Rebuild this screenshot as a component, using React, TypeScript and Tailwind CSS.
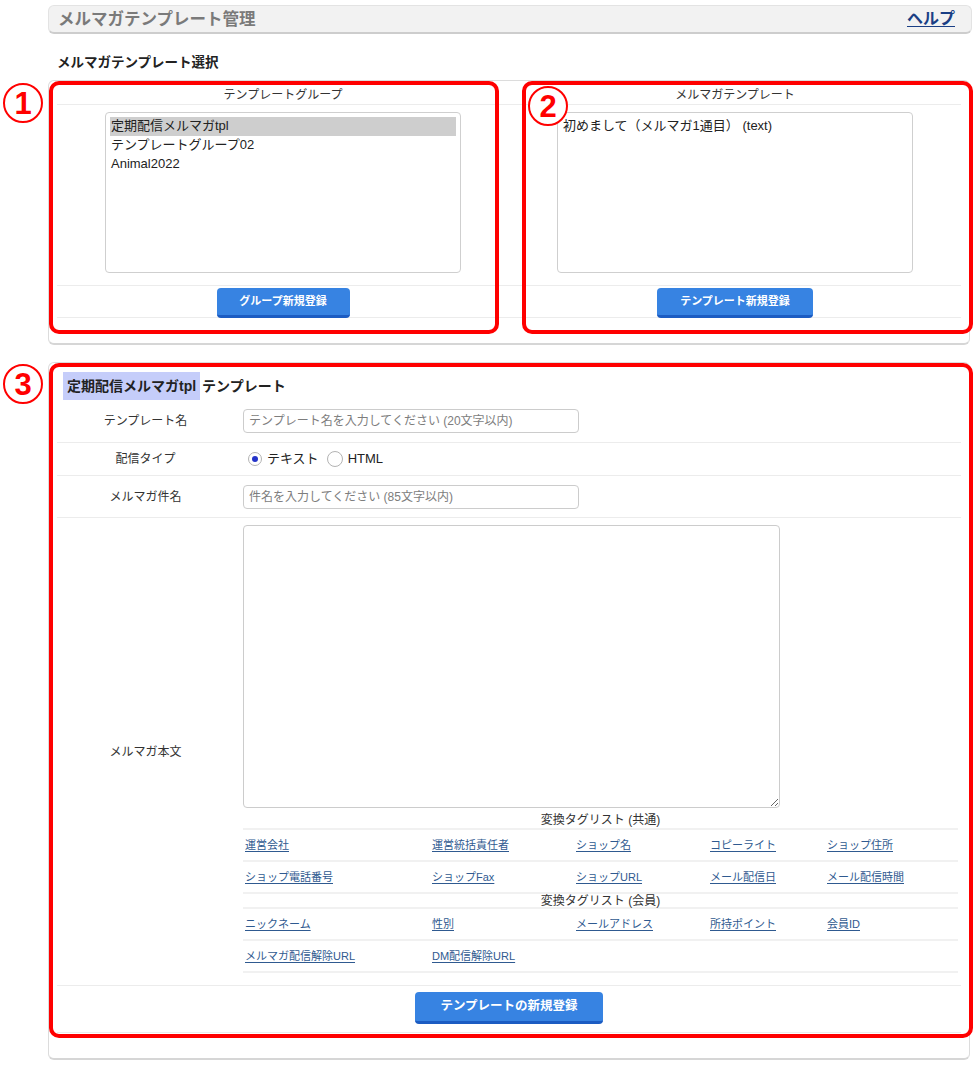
import React from "react";

const tagRows1 = [
  ["運営会社", "運営統括責任者", "ショップ名", "コピーライト", "ショップ住所"],
  ["ショップ電話番号", "ショップFax", "ショップURL", "メール配信日", "メール配信時間"],
];
const tagRows2 = [
  ["ニックネーム", "性別", "メールアドレス", "所持ポイント", "会員ID"],
  ["メルマガ配信解除URL", "DM配信解除URL"],
];

function TagRow({ items }: { items: string[] }) {
  return (
    <div className="grid grid-cols-[187px_144px_134px_117px_1fr] pl-[2px] h-[32px] items-center border-b-2 border-[#f1f1f1]">
      {items.map((t) => (
        <a key={t} href="#" className="text-[11px] text-[#2f5a90] underline underline-offset-2 leading-none">
          {t}
        </a>
      ))}
    </div>
  );
}

function BlueButton({ children, className }: { children: React.ReactNode; className: string }) {
  return (
    <button
      className={
        "rounded-[4px] bg-[#3783e2] border-b-[3px] border-[#1c5cc2] text-white font-bold flex items-center justify-center " +
        className
      }
    >
      {children}
    </button>
  );
}

function Circle({ n, cls }: { n: string; cls: string }) {
  return (
    <div
      className={
        "absolute w-[40px] h-[40px] rounded-full border-[2.5px] border-[#ff0000] bg-white text-[#ff0000] font-bold text-[31px] leading-none flex items-center justify-center font-['Liberation_Sans',sans-serif] " +
        cls
      }
    >
      {n}
    </div>
  );
}

export default function App() {
  return (
    <div className="relative w-[980px] min-h-[1070px] bg-white text-[#222] font-['Liberation_Sans','Noto_Sans_CJK_JP',sans-serif]">
      <div className="pl-[48px] pt-[5px]">
        {/* header */}
        <div className="w-[924px] h-[29px] rounded-[6px] bg-[#f2f2f2] border border-[#e3e3e3] border-b-2 border-b-[#cdcdcd] flex items-center justify-between pl-[9px] pr-[16px]">
          <div className="text-[16.5px] font-bold text-[#7a7a7a] leading-none">メルマガテンプレート管理</div>
          <a href="#" className="text-[16px] font-bold text-[#1a3f85] underline underline-offset-2 leading-none">
            ヘルプ
          </a>
        </div>

        <div className="mt-[19px] ml-[9px] text-[13.5px] font-bold leading-[20px]">メルマガテンプレート選択</div>

        {/* panel 1 */}
        <div className="mt-[7px] w-[922px] h-[265px] rounded-[6px] border border-[#dcdcdc] border-b-2 border-b-[#d6d6d6] px-[8px]">
          <div className="grid grid-cols-2">
            {[
              { title: "テンプレートグループ", btn: "グループ新規登録", bw: "w-[133px]", items: ["定期配信メルマガtpl", "テンプレートグループ02", "Animal2022"], sel: true },
              { title: "メルマガテンプレート", btn: "テンプレート新規登録", bw: "w-[156px]", items: ["初めまして（メルマガ1通目） (text)"], sel: false },
            ].map((c) => (
              <div key={c.title} className="flex flex-col">
                <div className="pt-[6px] h-[24px] text-[12px] leading-[17px] text-center text-[#333] border-b border-[#ececec]">{c.title}</div>
                <div className="h-[181px] pt-[7px] flex justify-center border-b border-[#ececec]">
                  <div className="w-[356px] h-[161px] rounded-[4px] border border-[#cfcfcf] p-[4px] text-[13px]">
                    {c.items.map((it, i) => (
                      <div
                        key={it}
                        className={
                          (i === 0 ? "h-[19px] leading-[18px] " : "h-[18.5px] leading-[18px] ") +
                          "pl-[1px] " +
                          (c.sel && i === 0 ? "bg-[#cecece]" : "")
                        }
                      >
                        {it}
                      </div>
                    ))}
                  </div>
                </div>
                <div className="h-[32px] pt-[2px] flex justify-center border-b border-[#ececec]">
                  <BlueButton className={c.bw + " h-[30px] text-[11px]"}>{c.btn}</BlueButton>
                </div>
              </div>
            ))}
          </div>
        </div>

        {/* panel 2 */}
        <div className="mt-[17px] w-[922px] h-[698px] rounded-[6px] border border-[#dcdcdc] border-b-2 border-b-[#d6d6d6] px-[8px] pt-[9px]">
          <div className="flex items-center h-[28px] ml-[6px] text-[14px] font-bold">
            <span className="bg-[#c5cdfa] h-[28px] px-[4px] flex items-center">定期配信メルマガtpl</span>
            <span className="ml-[2px]">テンプレート</span>
          </div>

          {/* row: template name */}
          <div className="flex items-center h-[43px] border-b border-[#ececec]">
            <div className="w-[186px] pr-[9px] text-center text-[12px] text-[#333]">テンプレート名</div>
            <input
              className="w-[336px] h-[24px] rounded-[4px] border border-[#cccccc] px-[5px] text-[12px] placeholder:text-[#7d7d7d] outline-none"
              placeholder="テンプレート名を入力してください (20文字以内)"
            />
          </div>

          {/* row: type */}
          <div className="flex items-center h-[33px] border-b border-[#ececec]">
            <div className="w-[186px] pr-[9px] text-center text-[12px] text-[#333]">配信タイプ</div>
            <div className="flex items-center ml-[5px] text-[13px]">
              <span className="w-[14px] h-[14px] rounded-full border border-[#b3b3b3] bg-white flex items-center justify-center">
                <span className="w-[6px] h-[6px] rounded-full bg-[#2433c9]" />
              </span>
              <span className="ml-[5px]">テキスト</span>
              <span className="ml-[8px] w-[16px] h-[16px] rounded-full border border-[#b3b3b3] bg-white" />
              <span className="ml-[5px]">HTML</span>
            </div>
          </div>

          {/* row: subject */}
          <div className="flex items-center h-[42px] border-b border-[#ececec]">
            <div className="w-[186px] pr-[9px] text-center text-[12px] text-[#333]">メルマガ件名</div>
            <input
              className="w-[336px] h-[24px] rounded-[4px] border border-[#cccccc] px-[5px] text-[12px] placeholder:text-[#7d7d7d] outline-none"
              placeholder="件名を入力してください (85文字以内)"
            />
          </div>

          {/* row: body */}
          <div className="flex h-[468px] border-b border-[#ececec]">
            <div className="w-[186px] pr-[9px] flex items-center justify-center text-[12px] text-[#333]">メルマガ本文</div>
            <div className="flex flex-col pt-[7px]">
              <textarea className="w-[537px] h-[283px] rounded-[4px] border border-[#cccccc] outline-none block" />
              <div className="w-[715px] mt-[4px]">
                <div className="h-[18px] text-center text-[12px] leading-[17px] text-[#333] border-b-2 border-[#f1f1f1]">変換タグリスト (共通)</div>
                {tagRows1.map((r, i) => (
                  <TagRow key={i} items={r} />
                ))}
                <div className="h-[15px] text-center text-[12px] leading-[14px] text-[#333] border-b-2 border-[#f1f1f1]">変換タグリスト (会員)</div>
                {tagRows2.map((r, i) => (
                  <TagRow key={i} items={r} />
                ))}
              </div>
            </div>
          </div>

          {/* button row */}
          <div className="h-[47px] pt-[6px] flex justify-center border-b border-[#ececec]">
            <BlueButton className="w-[188px] h-[32px] text-[12.5px]">テンプレートの新規登録</BlueButton>
          </div>
        </div>
      </div>

      {/* annotation boxes */}
      <div className="absolute left-[49px] top-[81px] w-[450px] h-[253px] border-4 border-[#ff0000] rounded-[10px] pointer-events-none" />
      <div className="absolute left-[522px] top-[81px] w-[451px] h-[253px] border-4 border-[#ff0000] rounded-[10px] pointer-events-none" />
      <div className="absolute left-[49px] top-[363px] w-[924px] h-[675px] border-4 border-[#ff0000] rounded-[10px] pointer-events-none" />
      <Circle n="1" cls="left-[3px] top-[83px]" />
      <Circle n="2" cls="left-[528px] top-[86px]" />
      <Circle n="3" cls="left-[3px] top-[364px]" />
    </div>
  );
}
